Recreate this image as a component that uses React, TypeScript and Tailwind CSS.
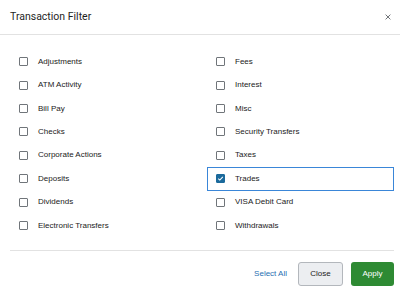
import clsx from "clsx"

const left = [
  "Adjustments",
  "ATM Activity",
  "Bill Pay",
  "Checks",
  "Corporate Actions",
  "Deposits",
  "Dividends",
  "Electronic Transfers",
]

const right = [
  "Fees",
  "Interest",
  "Misc",
  "Security Transfers",
  "Taxes",
  "Trades",
  "VISA Debit Card",
  "Withdrawals",
]

const Check = ({ label, checked }: { label: string; checked?: boolean }) => {
  return (
    <div
      className={clsx(
        "flex h-[23.43px] items-center gap-[10px] border pl-[8px]",
        checked ? "border-[#3a86d8]" : "border-transparent"
      )}
    >
      <span
        className={clsx(
          "flex h-[9px] w-[9px] shrink-0 items-center justify-center rounded-[1px] border",
          checked ? "border-[#1b6a9c] bg-[#1b6a9c]" : "border-[#70757a] bg-white"
        )}
      >
        {checked && (
          <svg viewBox="0 0 10 10" className="h-[7px] w-[7px]">
            <path d="M1.8 5.2 L4 7.3 L8.3 2.6" fill="none" stroke="white" strokeWidth="1.5" />
          </svg>
        )}
      </span>
      <span className="text-[8px] text-[#222]">{label}</span>
    </div>
  )
}

export default function App() {
  return (
    <div className="h-[291px] w-[400px] bg-white font-['Liberation_Sans',Arial,sans-serif]">
      <div className="flex h-[35px] items-center justify-between border-b border-[#e2e2e2] pl-[10px] pr-[9px]">
        <p className="font-['Roboto',sans-serif] text-[10.5px] text-[#1f1f1f]">Transaction Filter</p>
        <svg viewBox="0 0 10 10" className="h-[6px] w-[6px]">
          <path d="M1 1 L9 9 M9 1 L1 9" stroke="#6b6f73" strokeWidth="1.6" />
        </svg>
      </div>
      <div className="grid grid-cols-2 gap-x-[10px] pl-[10px] pr-[6px] pt-[15px]">
        <div className="flex flex-col">
          {left.map((label) => (
            <Check key={label} label={label} />
          ))}
        </div>
        <div className="flex flex-col">
          {right.map((label) => (
            <Check key={label} label={label} checked={label === "Trades"} />
          ))}
        </div>
      </div>
      <div className="ml-[10px] mr-[6px] mt-[13px] flex items-center justify-end gap-[8px] border-t border-[#e2e2e2] pt-[11px]">
        <span className="mr-[3px] text-[8px] text-[#1f6fb2]">Select All</span>
        <button className="h-[24px] w-[45px] rounded-[3px] border border-[#b3b7bc] bg-[#eceef1] text-[8px] text-[#222]">
          Close
        </button>
        <button className="h-[24px] w-[43px] rounded-[3px] bg-[#2e8a33] text-[8px] text-white">
          Apply
        </button>
      </div>
    </div>
  )
}
